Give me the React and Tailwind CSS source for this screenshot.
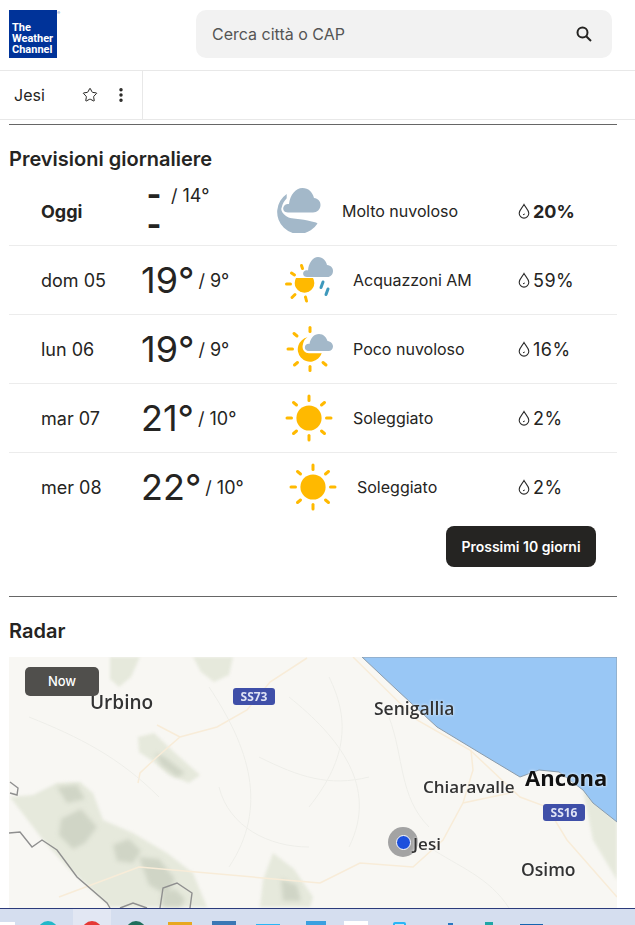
import React from 'react';
import { Star, EllipsisVertical } from 'lucide-react';

const days = [
  { day: 'dom 05', hi: '19°', lo: '/ 9°', icon: 'showers', text: 'Acquazzoni AM', rain: '59%', tempW: 'w-[144px]', textW: 'w-[165px]' },
  { day: 'lun 06', hi: '19°', lo: '/ 9°', icon: 'partly', text: 'Poco nuvoloso', rain: '16%', tempW: 'w-[144px]', textW: 'w-[165px]' },
  { day: 'mar 07', hi: '21°', lo: '/ 10°', icon: 'sun', text: 'Soleggiato', rain: '2%', tempW: 'w-[144px]', textW: 'w-[165px]' },
  { day: 'mer 08', hi: '22°', lo: '/ 10°', icon: 'sun', text: 'Soleggiato', rain: '2%', tempW: 'w-[148px]', textW: 'w-[161px]' },
];

const SUN = '#ffb900';
const CLOUD = '#a3b8c9';

const Ray = ({ x1, y1, x2, y2 }) => (
  <line x1={x1} y1={y1} x2={x2} y2={y2} stroke={SUN} strokeWidth="3" strokeLinecap="round" />
);

const WeatherIcon = ({ type }) => {
  if (type === 'sun') {
    return (
      <svg width="48" height="48" viewBox="0 0 48 48">
        <Ray x1="24" y1="2" x2="24" y2="6.500" />
        <Ray x1="24" y1="41.500" x2="24" y2="46" />
        <Ray x1="2" y1="24" x2="6.500" y2="24" />
        <Ray x1="41.500" y1="24" x2="46" y2="24" />
        <Ray x1="8.500" y1="8.500" x2="11.500" y2="11" />
        <Ray x1="39.500" y1="8.500" x2="36.500" y2="11" />
        <Ray x1="8.500" y1="39.500" x2="11.500" y2="37" />
        <Ray x1="39.500" y1="39.500" x2="36.500" y2="37" />
        <circle cx="24" cy="24" r="12.600" fill={SUN} />
      </svg>
    );
  }
  if (type === 'partly') {
    return (
      <svg width="48" height="48" viewBox="0 0 48 48">
        <Ray x1="25" y1="2.500" x2="25" y2="6.500" />
        <Ray x1="25" y1="41.500" x2="25" y2="45.500" />
        <Ray x1="3" y1="24" x2="7.500" y2="24" />
        <Ray x1="9" y1="8.500" x2="12" y2="11" />
        <Ray x1="9.500" y1="40" x2="12.500" y2="37.500" />
        <Ray x1="41" y1="40" x2="38" y2="37.500" />
        <path d="M22.500 12.300 A12.300 12.300 0 1 0 36.700 28.300 L24 28.300 C19 28 16.500 24 18 19 C18.500 16 20 14 22.500 12.300 Z" fill={SUN} />
        <path d="M24 26 C20.500 26 19.500 23.500 20 21.500 C20.500 19.500 22.500 18.500 24.500 19 C25.500 13 29 9 34 9 C38.500 9 41.500 12.500 42.500 16 C46 16.500 48 19 48 21.500 C48 24 46 26 43.500 26 Z" fill={CLOUD} />
      </svg>
    );
  }
  if (type === 'showers') {
    return (
      <svg width="49" height="48" viewBox="0 0 49 48">
        <Ray x1="16.500" y1="9.500" x2="17.500" y2="12.500" />
        <Ray x1="6.500" y1="17" x2="9.500" y2="19" />
        <Ray x1="1.500" y1="28" x2="5.500" y2="28" />
        <Ray x1="7" y1="41.500" x2="10" y2="38.500" />
        <Ray x1="20.500" y1="41" x2="21.500" y2="45" />
        <path d="M11 22 L28 22 A9.800 9.800 0 1 1 11 22 Z" fill={SUN} />
        <path d="M22 21 C18.500 21 17.500 18 18.500 16 C19.500 14.500 21.500 14 23 14.500 C23.500 7 28 1 33 1 C38 1 41 5 42 9 C46 9.500 48 12 48 15 C48 18.500 45.500 21 42.500 21 Z" fill={CLOUD} />
        <line x1="38" y1="26" x2="36" y2="31.500" stroke="#3e99bc" strokeWidth="3" strokeLinecap="round" />
        <line x1="43" y1="33" x2="41" y2="38.500" stroke="#3e99bc" strokeWidth="3" strokeLinecap="round" />
      </svg>
    );
  }
  return (
    <svg width="46" height="46" viewBox="0 0 46 46">
      <path d="M10.700 7 A21.800 21.800 0 1 0 41.500 36.500 L40 35.600 C34 34 29 33 24 32.300 C18 31.500 13 31.500 10 29 C6 26 4.500 23 5.700 20.500 C6.500 16.500 8.500 14 10.700 11.300 Z" fill={CLOUD} />
      <path d="M12 25.500 C8 25.500 6.500 22.500 7.500 20 C8.500 17.500 10.500 16.500 13 17 C14 8 19.500 1 26.500 1 C32.500 1 36.500 5 38 11 C42 11.500 44.500 14 44.500 18 C44.500 22.500 41 25.500 37 25.500 Z" fill={CLOUD} />
    </svg>
  );
};

const Drop = () => (
  <svg width="12" height="16" viewBox="0 0 12 16" fill="none" stroke="#2b2b2b" strokeWidth="1.100">
    <path d="M6 1.500 C7.500 4.500 10.800 7 10.800 10.300 A4.800 4.800 0 0 1 1.200 10.300 C1.200 7 4.500 4.500 6 1.500 Z" />
    <path d="M5 11.800 L6.800 11" strokeWidth="1" />
  </svg>
);

const Row = ({ d }) => (
  <div className="flex h-[69px] items-center border-t border-[#ececec]">
    <div className="ml-[32px] w-[100px] text-[18px]">{d.day}</div>
    <div className={`flex items-center ${d.tempW}`}>
      <span className="text-[36px] leading-none">{d.hi}</span>
      <span className="ml-[4px] text-[18px]">{d.lo}</span>
    </div>
    <div className="w-[48px]"><WeatherIcon type={d.icon} /></div>
    <div className={`ml-[20px] text-[16px] ${d.textW}`}>{d.text}</div>
    <div className="flex items-center gap-[3px] text-[18px] tracking-[0.5px]">
      <Drop />
      {d.rain}
    </div>
  </div>
);

const MapPlace = ({ name, className }) => (
  <span className={`absolute font-['Open_Sans',sans-serif] blur-[0.3px] [text-shadow:0_0_3px_#fff] ${className}`}>{name}</span>
);

const RoadSign = ({ label, className }) => (
  <span className={`absolute flex h-[17px] w-[42px] items-center justify-center rounded-[3px] bg-[#3f4fa8] font-['Open_Sans',sans-serif] text-[12px] font-bold text-[#dfe3f5] blur-[0.3px] ${className}`}>{label}</span>
);

const RadarMap = () => (
  <svg className="block h-full w-full" viewBox="0 0 608 251">
    <rect width="608" height="251" fill="#f8f7f3" />
    {/* hills */}
    <g fill="#e6e9dc" className="blur-[1.5px]">
      <path d="M101 0 L131 0 L122 20 L110 30 L101 22 Z" />
      <path d="M184 0 L224 0 L220 18 L205 25 L192 15 Z" />
      <path d="M129 80 L145 76 L165 95 L191 118 L180 126 L160 118 L145 105 L130 95 Z" />
      <path d="M1 140 L24 138 L48 126 L71 125 L84 136 L94 163 L124 176 L158 196 L184 216 L198 250 L101 250 L58 210 L34 183 L11 153 Z" />
      <path d="M264 196 L285 212 L304 240 L301 250 L251 250 L254 223 Z" />
      <path d="M574 133 L608 165 L608 223 L584 183 Z" />
    </g>
    <g fill="#d0d5c6" className="blur-[2px]">
      <path d="M48 130 L68 128 L76 142 L58 146 Z" />
      <path d="M52 162 L72 152 L88 170 L76 186 L64 192 L50 178 Z" />
      <path d="M146 96 L156 100 L176 116 L168 120 L152 108 Z" />
      <path d="M104 188 L120 182 L132 194 L124 206 L108 204 Z" />
      <path d="M130 200 L150 202 L166 222 L158 238 L140 228 Z" />
      <path d="M152 238 L166 232 L176 242 L172 250 L154 250 Z" />
      <path d="M272 222 L288 228 L292 244 L274 244 Z" />
    </g>
    {/* sea */}
    <path d="M353 0 L608 0 L608 165 L584 146 L574 133 L550 115 L530 113 L511 120 L471 96 L428 70 L388 33 Z" fill="#99c7f5" stroke="#8b9cab" strokeWidth="1" className="blur-[0.5px]" />
    {/* roads */}
    <g fill="none" stroke="#f8ecd8" strokeWidth="1.500" className="blur-[0.7px]">
      <path d="M298 1 L261 25 L238 53 L208 70 L171 80 L148 100 L131 116 L129 126" />
      <path d="M148 68 L171 80" />
      <path d="M344 0 L408 63 L461 93 L511 140 L538 150 L558 183 L608 240" />
      <path d="M311 226 L351 206 L404 210 L434 183 L454 146 L501 136" />
      <path d="M462 93 L464 113 L454 146" />
      <path d="M50 240 L130 210 L311 226" />
    </g>
    <g fill="none" stroke="#eeeee9" strokeWidth="1" className="blur-[0.5px]">
      <path d="M200 30 C240 90 260 150 220 210" />
      <path d="M280 40 C330 80 370 130 340 190" />
      <path d="M20 60 C70 80 110 100 150 140" />
      <path d="M420 190 C450 210 480 220 500 251" />
      <path d="M320 20 C340 60 340 100 300 150" />
      <path d="M250 100 C290 120 320 130 360 120" />
      <path d="M380 60 C395 100 390 140 420 170" />
      <path d="M210 130 C220 170 260 190 300 190" />
    </g>
    {/* province border */}
    <g fill="none" stroke="#8f8f8f" strokeWidth="1.400" className="blur-[0.5px]">
      <path d="M0 176 L11 175 L23 190 L33 183 L48 193 L68 220 L98 246 L101 251" />
      <path d="M151 251 L154 231 L168 226 L183 236 L181 251" />
      <path d="M111 251 L124 246 L138 251" />
      <path d="M1 125 L9 131 L8 138 L1 136" />
    </g>
  </svg>
);

const TaskbarIcons = () => (
  <div className="flex h-[16px] items-start overflow-hidden">
    <div className="mt-[13px] h-[4px] w-[15px] bg-white" />
    <div className="ml-[23px] mt-[12px] h-[20px] w-[20px] rounded-full bg-[#22b8c9]" />
    <div className="ml-[15px] flex h-[16px] w-[38px] justify-center bg-[#e2e7f3]">
      <div className="mt-[12px] h-[20px] w-[20px] rounded-full bg-[#e53935]" />
    </div>
    <div className="ml-[15px] mt-[12px] h-[20px] w-[20px] rounded-full bg-[#1f6f5c]" />
    <div className="ml-[22px] mt-[13px] h-[14px] w-[24px] bg-[#e8a820]" />
    <div className="ml-[20px] mt-[12px] h-[14px] w-[24px] bg-[#3a78b5]" />
    <div className="ml-[20px] mt-[15px] h-[10px] w-[24px] bg-[#29b6f6]" />
    <div className="ml-[26px] mt-[12px] h-[12px] w-[20px] bg-[#3aa0e0]" />
    <div className="ml-[18px] mt-[12px] h-[12px] w-[24px] bg-white" />
    <div className="ml-[25px] mt-[13px] h-[10px] w-[13px] rounded-[2px] border-2 border-[#29b6f6]" />
    <div className="ml-[42px] mt-[14px] h-[6px] w-[5px] bg-[#2a78c0]" />
    <div className="ml-[32px] mt-[13px] h-[8px] w-[8px] bg-[#1fa6a6]" />
    <div className="ml-[27px] mt-[15px] h-[10px] w-[23px] bg-[#1565b0]" />
  </div>
);

export default function App() {
  return (
    <div className="flex h-[925px] w-[635px] flex-col overflow-hidden bg-white font-['Inter',sans-serif] text-[#252422]">
      <header className="flex h-[71px] shrink-0 items-center border-b border-[#e8e8e8] pb-[2px] pl-[9px]">
        <div className="relative flex h-[48px] w-[48px] flex-col justify-end bg-[#003399] pb-[3px] pl-[3px] font-['Roboto',sans-serif] text-[11px] font-bold leading-[11px] text-white">
          <span>The</span>
          <span>Weather</span>
          <span>Channel</span>
          <span className="absolute left-[48px] top-0 text-[4px] leading-[6px] text-[#6f8fc8]">®</span>
        </div>
        <div className="ml-[139px] flex h-[48px] w-[416px] items-center justify-between rounded-[10px] bg-[#f2f2f2] pl-[16px] pr-[20px]">
          <span className="text-[16px] text-[#555]">Cerca città o CAP</span>
          <svg width="16" height="16" viewBox="0 0 16 16" fill="none" stroke="#252422" strokeWidth="2">
            <circle cx="6.500" cy="6.500" r="5" />
            <line x1="10.200" y1="10.200" x2="15" y2="15" />
          </svg>
        </div>
      </header>

      <nav className="flex h-[49px] shrink-0 border-b border-[#e8e8e8]">
        <div className="flex w-[143px] items-center border-r border-[#e8e8e8] pl-[14px]">
          <span className="text-[16px]">Jesi</span>
          <Star size={16} strokeWidth={1.500} className="ml-[37px]" />
          <EllipsisVertical size={18} strokeWidth={2.600} className="ml-[14px]" />
        </div>
      </nav>

      <main className="min-h-0 flex-1 overflow-hidden px-[9px]">
        <div className="mt-[4px] h-px w-[608px] bg-[#666]" />
        <h2 className="mt-[22px] text-[20px] font-semibold leading-[24px]">Previsioni giornaliere</h2>

        <div className="w-[608px]">
          <div className="flex h-[74px] items-center pt-[4px]">
            <div className="ml-[32px] w-[100px] pt-[2px] text-[18px] font-bold">Oggi</div>
            <div className="flex w-[135px] items-start">
              <span className="ml-[3px] w-[20px] text-center text-[32px] font-bold leading-[30px]">-<br />-</span>
              <span className="ml-[7px] mt-[3px] text-[18px] leading-[26px]">/ 14°</span>
            </div>
            <div className="w-[46px]"><WeatherIcon type="cloudy" /></div>
            <div className="ml-[20px] w-[176px] pt-[2px] text-[16px]">Molto nuvoloso</div>
            <div className="flex items-center gap-[3px] pt-[2px] text-[18px] font-bold">
              <Drop />
              20%
            </div>
          </div>
          {days.map((d) => <Row key={d.day} d={d} />)}
        </div>

        <div className="flex w-[608px] justify-end pr-[21px] pt-[5px]">
          <button className="h-[41px] w-[150px] rounded-[8px] bg-[#252422] text-[14px] font-semibold text-white">Prossimi 10 giorni</button>
        </div>

        <div className="mt-[29px] h-px w-[608px] bg-[#666]" />
        <h2 className="mt-[22px] text-[20px] font-semibold leading-[24px]">Radar</h2>

        <div className="relative mt-[14px] h-[251px] w-[608px] overflow-hidden">
          <RadarMap />
          <div className="absolute left-[379px] top-[170px] flex h-[30px] w-[30px] items-center justify-center rounded-full bg-[#a3a3a3]">
            <div className="h-[15px] w-[15px] rounded-full border border-white bg-[#1c4fdc]" />
          </div>
          <MapPlace name="Urbino" className="left-[81px] top-[31px] text-[19px] font-semibold text-[#333]" />
          <MapPlace name="Senigallia" className="left-[365px] top-[38px] text-[17.500px] font-semibold text-[#333]" />
          <MapPlace name="Chiaravalle" className="left-[414px] top-[117px] text-[17px] font-semibold text-[#333]" />
          <MapPlace name="Ancona" className="left-[516px] top-[104px] text-[22px] font-bold text-[#111]" />
          <MapPlace name="Jesi" className="left-[404px] top-[174px] text-[17px] font-semibold text-[#333]" />
          <MapPlace name="Osimo" className="left-[512px] top-[199px] text-[17.500px] font-semibold text-[#333]" />
          <RoadSign label="SS73" className="left-[224px] top-[31px]" />
          <RoadSign label="SS16" className="left-[534px] top-[147px]" />
          <div className="absolute left-[16px] top-[10px] flex h-[29px] w-[74px] items-center justify-center rounded-[5px] bg-[#504f4c] text-[13px] font-medium text-white">Now</div>
        </div>
      </main>

      <footer className="h-[17px] shrink-0 border-t border-[#2b3a7a] bg-[#d5deef]">
        <TaskbarIcons />
      </footer>
    </div>
  );
}
